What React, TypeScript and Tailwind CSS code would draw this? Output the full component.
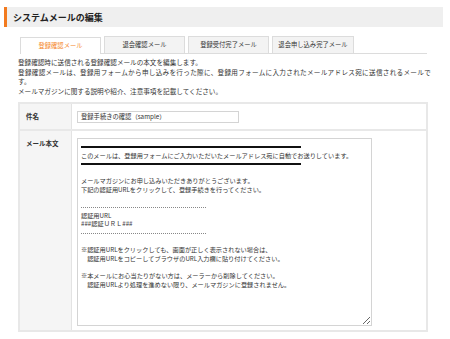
import React from 'react';

const tabs = ['登録確認メール', '退会確認メール', '登録受付完了メール', '退会申し込み完了メール'];

const heavy = '━'.repeat(35);
const dashes = '-'.repeat(62);

const bodyLines = [
  'HEAVY',
  'このメールは、登録用フォームにご入力いただいたメールアドレス宛に自動でお送りしています。',
  'HEAVY',
  '',
  'メールマガジンにお申し込みいただきありがとうございます。',
  '下記の認証用URLをクリックして、登録手続きを行ってください。',
  '',
  'DASH',
  '認証用URL',
  '###認証ＵＲＬ###',
  'DASH',
  '',
  '※認証用URLをクリックしても、画面が正しく表示されない場合は、',
  '　認証用URLをコピーしてブラウザのURL入力欄に貼り付けてください。',
  '',
  '※本メールにお心当たりがない方は、メーラーから削除してください。',
  '　認証用URLより処理を進めない限り、メールマガジンに登録されません。',
];

export default function App() {
  return (
    <div className="w-[450px] h-[339px] bg-white pt-[7px] text-[#333] font-['Noto_Sans_CJK_JP',sans-serif]">
      {/* 見出し */}
      <div className="ml-[4px] w-[439px] h-[20px] bg-[#efefef] border-l-[3px] border-[#f27a1f] flex items-center pl-[6px]">
        <h1 className="text-[9px] font-bold text-[#222] leading-none">システムメールの編集</h1>
      </div>

      {/* タブ */}
      <div className="ml-[20px] mt-[10px] w-[407px] h-[17px] flex items-end gap-[3px] border-b border-[#dcdcdc]">
        {tabs.map((t, i) => (
          <div
            key={t}
            className={
              i === 0
                ? 'w-[81px] h-[17px] -mb-px bg-white border border-b-0 border-[#dcdcdc] flex items-center justify-center text-[6.3px] text-[#f5861f]'
                : i === 3
                ? 'w-[82px] h-[17px] bg-[#f3f3f3] border border-b-0 border-[#dcdcdc] flex items-center justify-center text-[6.3px] text-[#333]'
                : 'w-[81px] h-[17px] bg-[#f3f3f3] border border-b-0 border-[#dcdcdc] flex items-center justify-center text-[6.3px] text-[#333]'
            }
          >
            {t}
          </div>
        ))}
      </div>

      {/* 説明 */}
      <div className="ml-[18px] mt-[4px] text-[6.6px] leading-[9.5px] whitespace-nowrap">
        <p>登録確認時に送信される登録確認メールの本文を編集します。</p>
        <p className="tracking-[0.3px]">登録確認メールは、登録用フォームから申し込みを行った際に、登録用フォームに入力されたメールアドレス宛に送信されるメールで</p>
        <p>す。</p>
        <p>メールマガジンに関する説明や紹介、注意事項を記載してください。</p>
      </div>

      {/* フォーム */}
      <div className="ml-[18px] mt-[6px] w-[410px] border-2 border-[#e8e8e8]">
        <div className="flex h-[27px] border-b-2 border-[#e8e8e8]">
          <div className="w-[52px] bg-[#f5f5f5] border-r border-[#e3e3e3] pl-[6px] pt-[8px]">
            <span className="text-[6.5px] leading-[9px] font-bold block">件名</span>
          </div>
          <div className="flex-1 pl-[5px] pt-[7px]">
            <div className="w-[162px] h-[12px] border border-[#d4d4d4] flex items-center pl-[3px] text-[6.3px]">
              登録手続きの確認（sample）
            </div>
          </div>
        </div>
        <div className="flex h-[199px]">
          <div className="w-[52px] bg-[#f5f5f5] border-r border-[#e3e3e3] pl-[6px] pt-[8px]">
            <span className="text-[6.5px] leading-[9px] font-bold block">メール本文</span>
          </div>
          <div className="flex-1 pl-[5px] pt-[7px]">
            <div className="w-[295px] h-[188px] border border-[#d4d4d4] bg-white pl-[3px] pt-[4px] text-[6.2px] leading-[8.6px] text-[#333] overflow-hidden resize whitespace-pre">
              {bodyLines.map((l, i) =>
                l === 'HEAVY' ? (
                  <div key={i} className="h-[8.6px] flex items-center">
                    <div className="w-[220px] h-[2px] bg-[#111]" />
                  </div>
                ) : l === 'DASH' ? (
                  <div key={i} className="h-[8.6px] flex items-center">
                    <div className="w-[125px] border-t border-dotted border-[#888]" />
                  </div>
                ) : (
                  <div key={i} className="h-[8.6px]">{l || ' '}</div>
                )
              )}
            </div>
          </div>
        </div>
      </div>
    </div>
  );
}
